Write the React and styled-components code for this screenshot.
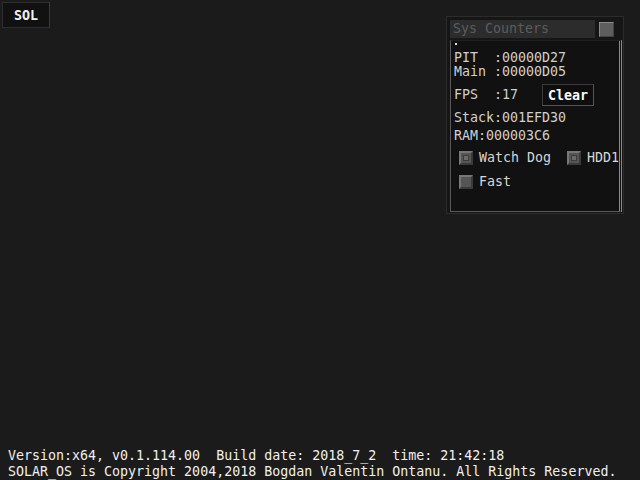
import styled, { createGlobalStyle } from "styled-components";

const GlobalStyle = createGlobalStyle`
  html, body {
    margin: 0;
    padding: 0;
    background: #1b1b1b;
  }
  #root {
    height: 480px;
  }
`;

const Desktop = styled.div`
  position: relative;
  height: 480px;
  display: flex;
  flex-direction: column;
  justify-content: space-between;
  font-family: "DejaVu Sans Mono", "Liberation Mono", monospace;
  font-size: 13.3px;
  color: #e8e8e8;
  overflow: hidden;
`;

const TopBar = styled.div`
  padding: 2px 0 0 2px;
  display: flex;
`;

const SolButton = styled.button`
  width: 48px;
  height: 26px;
  background: #111;
  border: 1px solid #2e2e2e;
  border-right-color: #3a3a3a;
  color: #f2f2f2;
  font-family: inherit;
  font-size: 13.3px;
  font-weight: bold;
  padding: 0;
`;

const Footer = styled.div`
  padding: 0 0 0 8px;
  line-height: 16px;
  white-space: pre;
  color: #f0f0f0;
`;

const Window = styled.div`
  position: absolute;
  left: 446px;
  top: 16px;
  width: 178px;
  height: 198px;
  box-sizing: border-box;
  background: #161616;
  border: 1px solid #2c2c2c;
  padding: 3px 1px 1px 3px;
  display: flex;
  flex-direction: column;
  gap: 2px;
`;

const TitleRow = styled.div`
  display: flex;
  align-items: center;
  gap: 4px;
`;

const Title = styled.div`
  flex: 1;
  height: 18px;
  background: #2c2c2c;
  color: #5c5c5c;
  padding-left: 3px;
  line-height: 18px;
`;

const CloseBox = styled.div`
  width: 13px;
  height: 13px;
  background: #5e5e5e;
  border: 1px solid #8a8a8a;
  border-right-color: #444;
  border-bottom-color: #444;
  margin-right: 8px;
`;

const Body = styled.div`
  flex: 1;
  border: 1px solid #5a5a5a;
  border-top-color: #1e1e1e;
  border-right: 3px double #8a8a8a;
  background: #111;
  padding: 1px 0 0 3px;
  color: #cfcfcf;
  line-height: 14px;
`;

const Dot = styled.div`
  width: 2px;
  height: 2px;
  background: #ddd;
  margin: 1px 0 6px 1px;
`;

const Line = styled.div`
  white-space: pre;
  margin-top: ${(p) => p.$gap || 0}px;
`;

const FpsRow = styled.div`
  display: flex;
  align-items: center;
  margin-top: 5px;
  white-space: pre;
`;

const ClearButton = styled.button`
  margin-left: 24px;
  width: 52px;
  height: 22px;
  background: #0e0e0e;
  border: 1px solid #3a3a3a;
  border-right-color: #555;
  border-bottom-color: #555;
  color: #fafafa;
  font-family: inherit;
  font-size: 13.3px;
  font-weight: bold;
  padding: 0;
`;

const CheckRow = styled.div`
  display: flex;
  gap: 16px;
  margin-top: ${(p) => p.$gap || 0}px;
  padding-left: 5px;
  white-space: nowrap;
`;

const Check = styled.label`
  display: flex;
  align-items: center;
  gap: 6px;
  color: #d6d6d6;
`;

const Box = styled.span`
  width: 10px;
  height: 10px;
  border: 2px solid #777;
  border-right-color: #3a3a3a;
  border-bottom-color: #3a3a3a;
  background: #555;
  display: flex;
  align-items: center;
  justify-content: center;

  &::after {
    content: "";
    width: 6px;
    height: 6px;
    box-sizing: border-box;
    background: ${(p) => (p.$on ? "#6a6a6a" : "transparent")};
    border: ${(p) => (p.$on ? "1px solid #3c3c3c" : "none")};
  }
`;

export default function App() {
  return (
    <>
      <GlobalStyle />
      <Desktop>
        <TopBar>
          <SolButton>SOL</SolButton>
        </TopBar>

        <Window>
          <TitleRow>
            <Title>Sys Counters</Title>
            <CloseBox />
          </TitleRow>
          <Body>
            <Dot />
            <Line>{"PIT  :00000D27"}</Line>
            <Line>{"Main :00000D05"}</Line>
            <FpsRow>
              {"FPS  :17"}
              <ClearButton>Clear</ClearButton>
            </FpsRow>
            <Line $gap={5}>{"Stack:001EFD30"}</Line>
            <Line $gap={4}>{"RAM:000003C6"}</Line>
            <CheckRow $gap={8}>
              <Check>
                <Box $on />
                Watch Dog
              </Check>
              <Check>
                <Box $on />
                HDD1
              </Check>
            </CheckRow>
            <CheckRow $gap={10}>
              <Check>
                <Box />
                Fast
              </Check>
            </CheckRow>
          </Body>
        </Window>

        <Footer>
          {"Version:x64, v0.1.114.00  Build date: 2018_7_2  time: 21:42:18\n"}
          {"SOLAR_OS is Copyright 2004,2018 Bogdan Valentin Ontanu. All Rights Reserved."}
        </Footer>
      </Desktop>
    </>
  );
}
